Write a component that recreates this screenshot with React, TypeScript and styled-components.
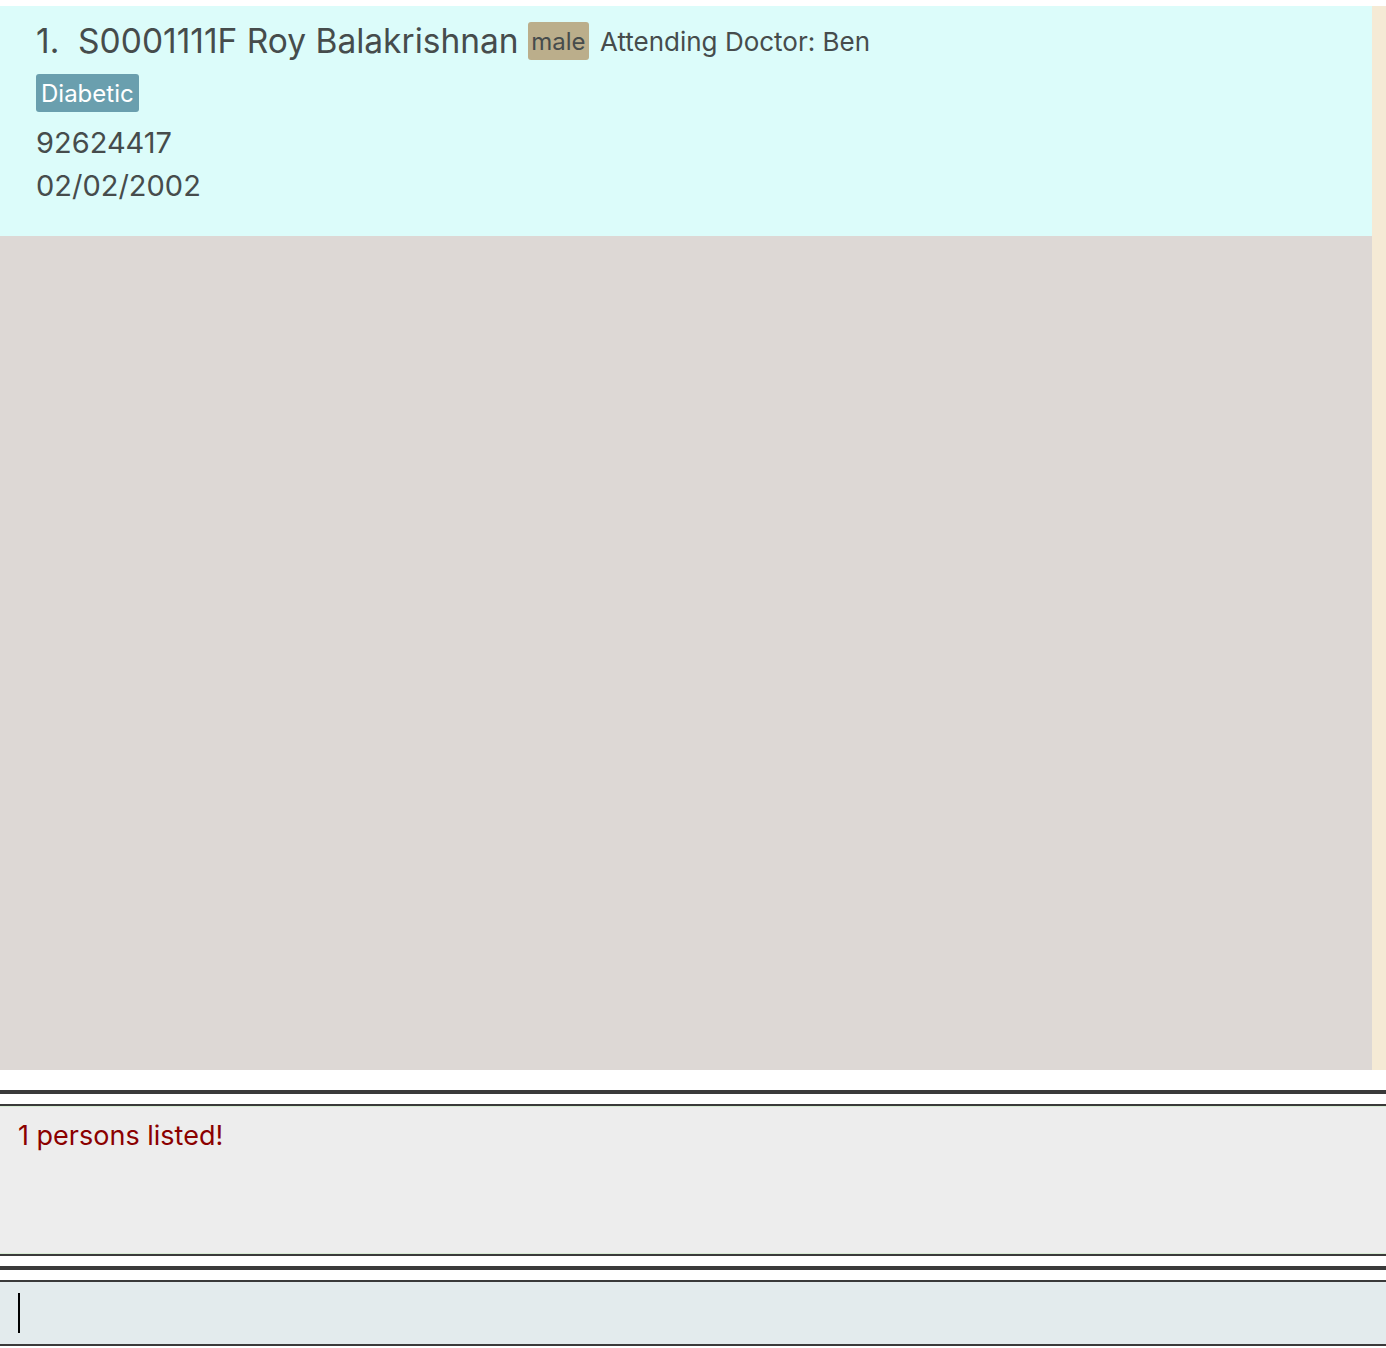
import React from "react";
import styled, { createGlobalStyle } from "styled-components";

const Global = createGlobalStyle`
  html, body { margin: 0; padding: 0; background: #ffffff; }
  body { font-family: Inter, "Noto Sans", "Liberation Sans", sans-serif; }
  * { box-sizing: border-box; }
`;

const Page = styled.div`
  display: flex;
  flex-direction: column;
  width: 1386px;
  height: 1348px;
  padding-top: 6px;
  background: #ffffff;
`;

const ListArea = styled.div`
  display: flex;
  height: 1064px;
`;

const ListView = styled.div`
  flex: 1;
  background: #ddd8d5;
  display: flex;
  flex-direction: column;
`;

const ScrollTrack = styled.div`
  width: 14px;
  background: #f5ead5;
`;

const Card = styled.div`
  height: 230px;
  background: #dcfcfa;
  padding: 16px 0 0 36px;
  color: #464c4c;
  display: flex;
  flex-direction: column;
`;

const HeaderRow = styled.div`
  display: flex;
  align-items: center;
  height: 38px;
`;

const Name = styled.span`
  font-size: 33.5px;
  white-space: pre;
  line-height: 38px;
  margin-right: 9px;
`;

const Label = styled.span<{ $bg: string; $fg: string; $pad: number }>`
  display: inline-flex;
  align-items: center;
  height: 38px;
  padding: 0 ${(p) => p.$pad}px;
  border-radius: 3px;
  background: ${(p) => p.$bg};
  color: ${(p) => p.$fg};
  font-size: 24px;
`;

const Doctor = styled.span`
  font-size: 26px;
  margin-left: 11px;
`;

const TagRow = styled.div`
  display: flex;
  margin-top: 14px;
  height: 38px;
`;

const Detail = styled.div<{ $first?: boolean }>`
  font-size: 29px;
  line-height: 43px;
  margin-top: ${(p) => (p.$first ? "9px" : "0")};
`;

const Spacer = styled.div<{ $h: number }>`
  height: ${(p) => p.$h}px;
  flex-shrink: 0;
`;

const ThickRule = styled.div`
  height: 4px;
  background: #3a3a3a;
  flex-shrink: 0;
`;

const ResultBox = styled.div`
  height: 152px;
  border-top: 2px solid #3a3a3a;
  border-bottom: 2px solid #3a3a3a;
  background: #ededed;
  box-shadow: inset 0 1px 0 #d8ecd4, inset 0 -1px 0 #d8ecd4;
  padding: 12px 0 0 18px;
  color: #8b0000;
  font-size: 27px;
  line-height: 35px;
`;

const CommandBox = styled.div`
  height: 66px;
  border-top: 2px solid #3a3a3a;
  border-bottom: 2px solid #3a3a3a;
  background: #e3ebed;
  padding: 11px 0 0 18px;
`;

const Caret = styled.div`
  width: 2px;
  height: 40px;
  background: #000000;
`;

export default function App() {
  return (
    <>
      <Global />
      <Page>
        <ListArea>
          <ListView>
            <Card>
              <HeaderRow>
                <Name>{"1.  S0001111F Roy Balakrishnan"}</Name>
                <Label $bg="#bbae8b" $fg="#464c4c" $pad={3.5}>male</Label>
                <Doctor>Attending Doctor: Ben</Doctor>
              </HeaderRow>
              <TagRow>
                <Label $bg="#6a9fae" $fg="#ffffff" $pad={5}>Diabetic</Label>
              </TagRow>
              <Detail $first>92624417</Detail>
              <Detail>02/02/2002</Detail>
            </Card>
          </ListView>
          <ScrollTrack />
        </ListArea>
        <Spacer $h={20} />
        <ThickRule />
        <Spacer $h={10} />
        <ResultBox>1 persons listed!</ResultBox>
        <Spacer $h={10} />
        <ThickRule />
        <Spacer $h={10} />
        <CommandBox>
          <Caret />
        </CommandBox>
      </Page>
    </>
  );
}
